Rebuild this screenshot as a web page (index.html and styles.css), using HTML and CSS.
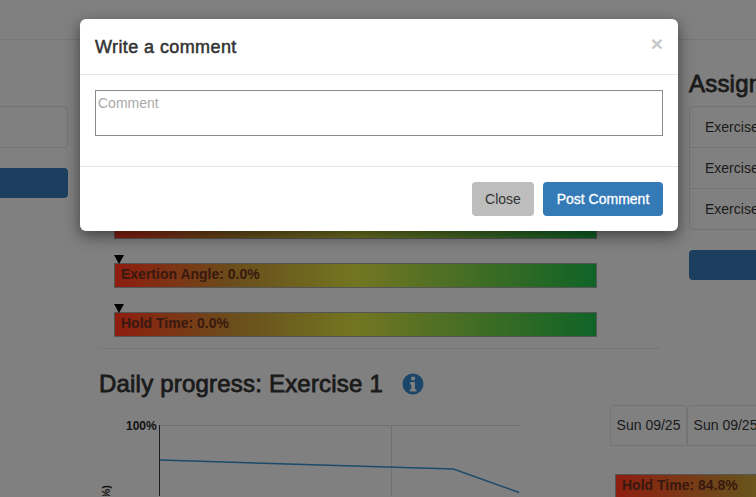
FILE: index.html
```html
<!DOCTYPE html>
<html lang="en">

<head>
    <meta charset="UTF-8">
    <title>Progress</title>
    <link rel="stylesheet" href="styles.css">
</head>

<body>
    <div class="page">
        <div class="navbar"></div>

        <div class="top-row">
            <div class="left-col">
                <div class="side-box"></div>
                <div class="side-btn"></div>
            </div>

            <div class="center-col">
                <div class="score-bar"></div>
                <div class="score-row">
                    <span class="marker"></span>
                    <div class="score-bar">Exertion Angle: 0.0%</div>
                </div>
                <div class="score-row">
                    <span class="marker"></span>
                    <div class="score-bar">Hold Time: 0.0%</div>
                </div>
            </div>

            <div class="right-col">
                <h2 class="assign-title">Assigned Exercises</h2>
                <div class="list-group">
                    <div class="list-item">Exercise 1</div>
                    <div class="list-item">Exercise 2</div>
                    <div class="list-item">Exercise 3</div>
                </div>
                <div class="side-btn"></div>
            </div>
        </div>

        <hr class="divider">

        <h2 class="progress-title">
            Daily progress: Exercise 1
            <svg class="info-icon" viewBox="0 0 22 22">
                <circle cx="11" cy="11" r="10.5" fill="#1b4669"/>
                <rect x="9.2" y="3.8" width="3.8" height="3.4" rx=".6" fill="#808080"/>
                <path d="M8 9h5v7.2h1.4V18.600H7.800v-2.400h1.500v-4.800H8z" fill="#808080"/>
            </svg>
        </h2>

        <div class="progress-row">
            <svg class="chart" viewBox="0 0 420 77">
                <path d="M60 6.500H420M291.500 6.500V77" stroke="#707070" fill="none"/>
                <path d="M59.500 6V77" stroke="#1d1d1d" fill="none"/>
                <path d="M60 41L353.500 50L419 73.500" stroke="#1c4a6a" stroke-width="1.500" fill="none"/>
                <text class="axis-label" x="26" y="11">100%</text>
                <text class="axis-title" text-anchor="end" transform="translate(10 66) rotate(-90)">%)</text>
            </svg>

            <div class="dates">
                <div class="date-tabs">
                    <div class="date-tab">Sun 09/25</div>
                    <div class="date-tab">Sun 09/25</div>
                </div>
                <div class="score-bar small-bar">Hold Time: 84.8%</div>
            </div>
        </div>
    </div>

    <div class="modal">
        <div class="modal-header">
            <h4 class="modal-title">Write a comment</h4>
            <span class="close-x">×</span>
        </div>
        <div class="modal-body">
            <textarea class="comment-box" placeholder="Comment"></textarea>
        </div>
        <div class="modal-footer">
            <button class="btn btn-close">Close</button>
            <button class="btn btn-post">Post Comment</button>
        </div>
    </div>
</body>

</html>
```

FILE: styles.css
```css
html,
body {
    height: 100%;
    margin: 0;
    overflow: hidden;
    background-color: #808080;
    font-family: "Liberation Sans", Arial, sans-serif;
    color: #1a1a1a;
}

.page {
    width: 756px;
    height: 497px;
    overflow: hidden;
}

.navbar {
    height: 39px;
    border-bottom: 1px solid #777;
}

.top-row {
    display: grid;
    grid-template-columns: 68px 621px 220px;
}

.left-col {
    padding-top: 66px;
}

.side-box {
    height: 40px;
    border: 1px solid #747474;
    border-left: none;
    border-radius: 0 4px 4px 0;
}

.side-btn {
    height: 30px;
    margin-top: 20px;
    background-color: #1c3f5f;
    border-radius: 4px;
}

.left-col .side-btn {
    border-radius: 0 4px 4px 0;
}

.center-col {
    padding: 174px 92px 0 46px;
}

.score-bar {
    height: 23px;
    padding-left: 6px;
    border: 1px solid #555;
    background: linear-gradient(to right, #8e1d0f, #6a4e1b 25%, #737622 50%, #0f6427);
    color: #38190f;
    font-size: 14px;
    font-weight: bold;
    line-height: 21px;
}

.score-row {
    position: relative;
    margin-top: 24px;
}

.marker {
    position: absolute;
    left: 0;
    top: -8px;
    width: 0;
    height: 0;
    border-left: 5px solid transparent;
    border-right: 5px solid transparent;
    border-top: 9px solid #000;
}

.right-col {
    padding-top: 31px;
}

.assign-title {
    margin: 0 0 9px;
    font-size: 24px;
    font-weight: normal;
    letter-spacing: 0.2px;
    line-height: 26px;
    white-space: nowrap;
    -webkit-text-stroke: 0.8px #1a1a1a;
}

.list-group {
    border: 1px solid #747474;
    border-radius: 4px;
}

.list-item {
    height: 40px;
    padding-left: 15px;
    font-size: 14px;
    line-height: 40px;
    border-bottom: 1px solid #747474;
}

.list-item:last-child {
    border-bottom: none;
}

.divider {
    height: 1px;
    margin: 11px 96px 0 98px;
    border: none;
    background-color: #777;
}

.progress-title {
    display: flex;
    align-items: center;
    gap: 19px;
    height: 26px;
    margin: 22px 0 0 99px;
    font-size: 24px;
    font-weight: normal;
    letter-spacing: 0.2px;
    white-space: nowrap;
    -webkit-text-stroke: 0.8px #1a1a1a;
}

.info-icon {
    width: 22px;
    height: 22px;
}

.progress-row {
    display: flex;
    margin: 8px 0 0 100px;
}

.chart {
    width: 420px;
    height: 77px;
    margin-top: 14px;
    flex: none;
}

.axis-label {
    font-size: 12px;
    font-weight: bold;
    fill: #111;
}

.axis-title {
    font-size: 11px;
    font-weight: bold;
    fill: #111;
}

.dates {
    margin-left: 90px;
    flex: none;
}

.date-tabs {
    display: flex;
}

.date-tab {
    width: 75px;
    height: 39px;
    border: 1px solid #747474;
    border-radius: 4px 4px 0 0;
    font-size: 14px;
    line-height: 39px;
    text-align: center;
}

.small-bar {
    width: 476px;
    margin: 28px 0 0 5px;
}

.modal {
    position: absolute;
    left: 80px;
    top: 19px;
    width: 598px;
    height: 212px;
    display: flex;
    flex-direction: column;
    background-color: #fff;
    border-radius: 6px;
    box-shadow: 0 5px 15px rgba(0, 0, 0, 0.5);
}

.modal-header {
    display: flex;
    justify-content: space-between;
    height: 56px;
    padding: 0 15px;
    border-bottom: 1px solid #e5e5e5;
    box-sizing: border-box;
}

.modal-title {
    margin: 18px 0 0;
    font-size: 18px;
    font-weight: 500;
    letter-spacing: 0.4px;
    line-height: 20px;
    color: #333;
    -webkit-text-stroke: 0.5px #333;
}

.close-x {
    margin-top: 13px;
    font-size: 21px;
    font-weight: bold;
    line-height: 24px;
    color: #c8c8c8;
}

.modal-body {
    height: 91px;
    padding: 15px;
    box-sizing: border-box;
}

.comment-box {
    display: block;
    width: 100%;
    height: 46px;
    margin: 0;
    padding: 4px 2px;
    box-sizing: border-box;
    border: 1px solid #8a8a8a;
    border-radius: 0;
    font-family: "Liberation Sans", Arial, sans-serif;
    font-size: 14px;
    resize: none;
}

.comment-box::placeholder {
    color: #a9a9a9;
}

.modal-footer {
    display: flex;
    justify-content: flex-end;
    gap: 9px;
    padding: 15px;
    border-top: 1px solid #e5e5e5;
}

.btn {
    height: 34px;
    padding: 0 13px;
    border: none;
    border-radius: 4px;
    font-family: "Liberation Sans", Arial, sans-serif;
    font-size: 14px;
    cursor: pointer;
}

.btn-close {
    width: 62px;
    background-color: #bdbdbd;
    color: #333;
}

.btn-post {
    width: 120px;
    background-color: #337ab7;
    color: #fff;
    -webkit-text-stroke: 0.3px #fff;
}
```
